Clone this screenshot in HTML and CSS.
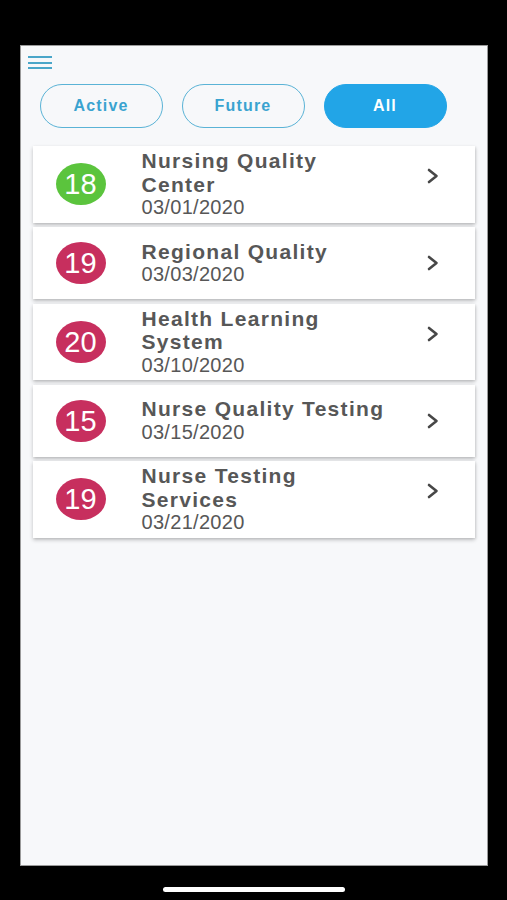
FILE: index.html
```html
<!DOCTYPE html>
<html lang="en">
<head>
<meta charset="utf-8">
<title>Events</title>
<link rel="stylesheet" href="styles.css">
</head>
<body>
<div class="phone">
  <div class="screen">
    <div class="menu">
      <svg width="24" height="14" viewBox="0 0 24 14" aria-hidden="true">
        <rect x="0" y="0" width="24" height="2" fill="#4aa6c9"/>
        <rect x="0" y="6" width="24" height="2" fill="#4aa6c9"/>
        <rect x="0" y="11" width="24" height="2" fill="#4aa6c9"/>
      </svg>
    </div>
    <div class="filters">
      <button class="pill">Active</button>
      <button class="pill">Future</button>
      <button class="pill pill--on">All</button>
    </div>
    <div class="list">
      <div class="card card--wrap">
        <div class="badge badge--green">18</div>
        <div class="info">
          <div class="title">Nursing Quality Center</div>
          <div class="date">03/01/2020</div>
        </div>
        <svg class="chev" width="12" height="16" viewBox="0 0 12 16"><polyline points="2,2 9.5,8 2,14" fill="none" stroke="#474747" stroke-width="2.6" stroke-linecap="round" stroke-linejoin="round"/></svg>
      </div>
      <div class="card">
        <div class="badge badge--red">19</div>
        <div class="info">
          <div class="title">Regional Quality</div>
          <div class="date">03/03/2020</div>
        </div>
        <svg class="chev" width="12" height="16" viewBox="0 0 12 16"><polyline points="2,2 9.5,8 2,14" fill="none" stroke="#474747" stroke-width="2.6" stroke-linecap="round" stroke-linejoin="round"/></svg>
      </div>
      <div class="card card--wrap">
        <div class="badge badge--red">20</div>
        <div class="info">
          <div class="title">Health Learning System</div>
          <div class="date">03/10/2020</div>
        </div>
        <svg class="chev" width="12" height="16" viewBox="0 0 12 16"><polyline points="2,2 9.5,8 2,14" fill="none" stroke="#474747" stroke-width="2.6" stroke-linecap="round" stroke-linejoin="round"/></svg>
      </div>
      <div class="card">
        <div class="badge badge--red">15</div>
        <div class="info">
          <div class="title">Nurse Quality Testing</div>
          <div class="date">03/15/2020</div>
        </div>
        <svg class="chev" width="12" height="16" viewBox="0 0 12 16"><polyline points="2,2 9.5,8 2,14" fill="none" stroke="#474747" stroke-width="2.6" stroke-linecap="round" stroke-linejoin="round"/></svg>
      </div>
      <div class="card card--wrap">
        <div class="badge badge--red">19</div>
        <div class="info">
          <div class="title">Nurse Testing Services</div>
          <div class="date">03/21/2020</div>
        </div>
        <svg class="chev" width="12" height="16" viewBox="0 0 12 16"><polyline points="2,2 9.5,8 2,14" fill="none" stroke="#474747" stroke-width="2.6" stroke-linecap="round" stroke-linejoin="round"/></svg>
      </div>
    </div>
  </div>
  <div class="home-bar"></div>
</div>
</body>
</html>
```

FILE: styles.css
```css
html, body {
  margin: 0;
  padding: 0;
  background: #000;
}

body {
  font-family: "Liberation Sans", Arial, sans-serif;
}

.phone {
  width: 507px;
  height: 900px;
  display: flex;
  flex-direction: column;
  align-items: center;
}

.screen {
  box-sizing: border-box;
  margin-top: 45px;
  width: 468px;
  height: 821px;
  background: #f7f8fa;
  border: 1px solid #9a9a9a;
}

.menu {
  padding: 10px 0 0 7px;
  height: 14px;
}

.menu svg {
  display: block;
}

.filters {
  display: flex;
  gap: 19px;
  padding: 14px 0 0 19px;
}

.pill {
  box-sizing: border-box;
  width: 123px;
  height: 44px;
  border-radius: 22px;
  border: 1.5px solid #5ab3d6;
  background: transparent;
  color: #3aa3d0;
  font-family: "Liberation Sans", Arial, sans-serif;
  font-weight: bold;
  font-size: 16px;
  letter-spacing: 1.2px;
  padding: 0;
}

.pill--on {
  background: #22a5e7;
  border-color: #22a5e7;
  color: #fff;
}

.list {
  margin: 18px 12px 0 12px;
  display: flex;
  flex-direction: column;
  gap: 4.5px;
}

.card {
  box-sizing: border-box;
  display: flex;
  align-items: center;
  min-height: 72px;
  padding: 3px 0;
  background: #fff;
  box-shadow: 0 2px 4px rgba(0, 0, 0, 0.22), 1px 1px 2px rgba(0, 0, 0, 0.08);
}

.badge {
  flex-shrink: 0;
  width: 50px;
  height: 42px;
  margin-left: 23px;
  margin-right: 36px;
  border-radius: 50%;
  color: #fff;
  font-size: 29px;
  line-height: 43px;
  text-align: center;
}

.badge--green {
  background: #5bc43d;
}

.badge--red {
  background: #c72f5e;
}

.info {
  width: 250px;
  color: #575757;
}

.title {
  font-weight: bold;
  font-size: 21px;
  line-height: 23.5px;
  letter-spacing: 1.3px;
}

.date {
  font-size: 20px;
  line-height: 23.5px;
  letter-spacing: 0.3px;
}

.chev {
  flex-shrink: 0;
  margin-left: auto;
  margin-right: 36px;
}

.card--wrap .chev {
  margin-bottom: 16px;
}

.home-bar {
  margin-top: 21px;
  width: 182px;
  height: 5px;
  border-radius: 3px;
  background: #fff;
}
```
